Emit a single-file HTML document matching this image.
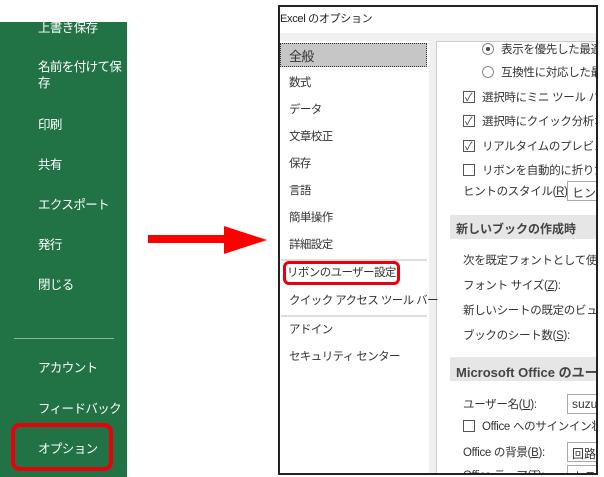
<!DOCTYPE html>
<html><head><meta charset="utf-8"><style>
*{margin:0;padding:0;box-sizing:border-box}
body{width:604px;height:477px;background:#fff;position:relative;overflow:hidden;font-family:"Liberation Sans","Noto Sans CJK JP",sans-serif}
.a{position:absolute;white-space:nowrap}
.g{color:#fff;font-size:12.5px;left:38px;letter-spacing:-0.6px}
.n{font-size:11.5px;color:#333;left:289px;letter-spacing:-0.6px}
.c{font-size:11.5px;color:#333;letter-spacing:-0.3px}
.cb{position:absolute;width:12px;height:12px;border:1px solid #555;background:#fff}
.ck{font-size:11px;color:#444;position:absolute;left:1px;top:-3px}
.rd{position:absolute;width:12px;height:12px;border:1px solid #888;border-radius:50%;background:#fff}
.sec{position:absolute;left:450px;width:147px;height:24px;background:#e6e6e6;font-size:12px;font-weight:bold;color:#444;padding:5px 0 0 6px;white-space:nowrap;overflow:hidden}
.in{position:absolute;left:567px;width:30px;height:20px;border:1px solid #aaa;background:#fff;font-size:12px;padding:2px 0 0 4px;overflow:hidden;white-space:nowrap;color:#333}
#clip{position:absolute;left:0;top:0;width:596px;height:473px;overflow:hidden}
</style></head><body>
<div class="a" style="left:0;top:22px;width:127px;height:455px;background:#217346"></div>
<div class="a g" style="top:17px">上書き保存</div>
<div class="a g" style="top:59px;line-height:16px">名前を付けて保<br>存</div>
<div class="a g" style="top:114px">印刷</div>
<div class="a g" style="top:154px">共有</div>
<div class="a g" style="top:194px">エクスポート</div>
<div class="a g" style="top:234px">発行</div>
<div class="a g" style="top:274px">閉じる</div>
<div class="a" style="left:14px;top:338px;width:100px;height:1px;background:#8bb79d"></div>
<div class="a g" style="top:357px">アカウント</div>
<div class="a g" style="top:398px">フィードバック</div>
<div class="a g" style="top:438px">オプション</div>
<div class="a" style="left:11px;top:423px;width:102px;height:48px;border:4px solid #e8000b;border-radius:9px"></div>

<div class="a" style="left:148px;top:235px;width:78px;height:8px;background:#f00"></div>
<div class="a" style="left:224px;top:226px;width:0;height:0;border-top:14px solid transparent;border-bottom:14px solid transparent;border-left:43px solid #f00"></div>

<div class="a" style="left:278px;top:5px;width:320px;height:470px;border:2px solid #222;background:#f0f0f0"></div>
<div id="clip">
<div class="a" style="left:280px;top:7px;width:316px;height:26px;background:#fff"></div>
<div class="a" style="left:280px;top:10px;font-size:11px;color:#222;letter-spacing:-0.3px">Excel のオプション</div>
<div class="a" style="left:280px;top:41px;width:149px;height:432px;background:#fff"></div>
<div class="a" style="left:436px;top:41px;width:160px;height:432px;background:#fff;border-left:1px solid #ccc;border-top:1px solid #ccc"></div>
<div class="a" style="left:280px;top:43px;width:147px;height:24px;background:#c6c6c6;border:1px dotted #333"></div>
<div class="a n" style="top:46px;font-size:13px">全般</div>
<div class="a n" style="top:74px">数式</div>
<div class="a n" style="top:101px">データ</div>
<div class="a n" style="top:128px">文章校正</div>
<div class="a n" style="top:155px">保存</div>
<div class="a n" style="top:182px">言語</div>
<div class="a n" style="top:209px">簡単操作</div>
<div class="a n" style="top:236px">詳細設定</div>
<div class="a" style="left:281px;top:259px;width:146px;height:2px;background:#ddd"></div>
<div class="a n" style="top:264px;left:287px">リボンのユーザー設定</div>
<div class="a" style="left:283px;top:261px;width:117px;height:24px;border:3px solid #e8000b;border-radius:6px"></div>
<div class="a n" style="top:292px">クイック アクセス ツール バー</div>
<div class="a" style="left:281px;top:315px;width:146px;height:2px;background:#ddd"></div>
<div class="a n" style="top:321px">アドイン</div>
<div class="a n" style="top:348px">セキュリティ センター</div>

<div class="rd" style="left:482px;top:43px"><div style="position:absolute;left:3px;top:3px;width:4px;height:4px;border-radius:50%;background:#444"></div></div>
<div class="a c" style="left:501px;top:41px">表示を優先した最適化</div>
<div class="rd" style="left:482px;top:66px"></div>
<div class="a c" style="left:501px;top:64px">互換性に対応した最適化</div>
<div class="cb" style="left:463px;top:91px"><span class="ck">✓</span></div>
<div class="a c" style="left:482px;top:89px">選択時にミニ ツール バー</div>
<div class="cb" style="left:463px;top:115px"><span class="ck">✓</span></div>
<div class="a c" style="left:482px;top:113px">選択時にクイック分析オプ</div>
<div class="cb" style="left:463px;top:140px"><span class="ck">✓</span></div>
<div class="a c" style="left:482px;top:138px">リアルタイムのプレビュー表</div>
<div class="cb" style="left:463px;top:164px"></div>
<div class="a c" style="left:482px;top:162px">リボンを自動的に折りたた</div>
<div class="a c" style="left:463px;top:183px">ヒントのスタイル(<u>R</u>):</div>
<div class="in" style="top:181px">ヒント</div>
<div class="sec" style="top:215px">新しいブックの作成時</div>
<div class="a c" style="left:463px;top:252px">次を既定フォントとして使用(</div>
<div class="a c" style="left:463px;top:277px">フォント サイズ(<u>Z</u>):</div>
<div class="a c" style="left:463px;top:302px">新しいシートの既定のビュー(</div>
<div class="a c" style="left:463px;top:327px">ブックのシート数(<u>S</u>):</div>
<div class="sec" style="top:357px;font-size:13px">Microsoft Office のユーザー</div>
<div class="a c" style="left:463px;top:396px">ユーザー名(<u>U</u>):</div>
<div class="in" style="top:394px">suzuki</div>
<div class="cb" style="left:463px;top:420px"></div>
<div class="a c" style="left:482px;top:418px">Office へのサインイン状態</div>
<div class="a c" style="left:463px;top:444px">Office の背景(<u>B</u>):</div>
<div class="in" style="top:442px">回路</div>
<div class="a c" style="left:463px;top:467px">Office テーマ(<u>T</u>):</div>
<div class="in" style="top:465px">カラー</div>
</div>
<div class="a" style="left:278px;top:473px;width:320px;height:4px;background:#fff;border-top:2px solid #222"></div>
</body></html>
